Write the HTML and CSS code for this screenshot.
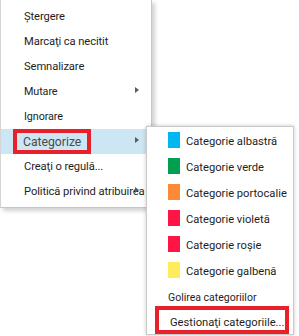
FILE: index.html
```html
<!DOCTYPE html>
<html lang="ro">
<head>
<meta charset="utf-8">
<link rel="stylesheet" href="styles.css">
</head>
<body>
<div class="stage">
  <ul class="menu main">
    <li class="item">Ştergere</li>
    <li class="item">Marcaţi ca necitit</li>
    <li class="item">Semnalizare</li>
    <li class="item small has-sub">Mutare</li>
    <li class="item small">Ignorare</li>
    <li class="item active has-sub mark">Categorize</li>
    <li class="item">Creaţi o regulă...</li>
    <li class="item has-sub">Politică privind atribuirea</li>
  </ul>
  <ul class="menu sub">
    <li class="cat"><span class="swatch blue"></span><span class="label">Categorie albastră</span></li>
    <li class="cat"><span class="swatch green"></span><span class="label">Categorie verde</span></li>
    <li class="cat"><span class="swatch orange"></span><span class="label">Categorie portocalie</span></li>
    <li class="cat"><span class="swatch purple"></span><span class="label">Categorie violetă</span></li>
    <li class="cat"><span class="swatch red"></span><span class="label">Categorie roşie</span></li>
    <li class="cat"><span class="swatch yellow"></span><span class="label">Categorie galbenă</span></li>
    <li class="plain clear">Golirea categoriilor</li>
    <li class="plain manage mark">Gestionaţi categoriile...</li>
  </ul>
</div>
</body>
</html>
```
FILE: styles.css
```css
html, body {
  margin: 0;
  padding: 0;
  background: #ffffff;
}
body {
  font-family: Roboto, "Liberation Sans", Arial, sans-serif;
  font-size: 11.2px;
  color: #1e1e1e;
}
.stage {
  position: relative;
  width: 299px;
  height: 336px;
  overflow: hidden;
}
.menu {
  list-style: none;
  margin: 0;
  background: #ffffff;
}
.main {
  width: 150px;
  padding: 4px 0 3px 0;
  border-left: 1px solid #d4d4d4;
  border-right: 1px solid #c6c6c6;
  border-bottom: 1px solid #c6c6c6;
  box-shadow: 3px 3px 4px rgba(0, 0, 0, 0.18);
}
.item {
  position: relative;
  height: 25px;
  display: flex;
  align-items: center;
  padding-left: 23px;
  white-space: nowrap;
  letter-spacing: -0.1px;
}
.item.small {
  font-size: 10.8px;
}
.item.active {
  background: #cde6f4;
  color: #4a4a4a;
  font-size: 12.2px;
  letter-spacing: 0;
  padding-left: 22px;
}
.has-sub::after {
  content: "";
  position: absolute;
  left: 134px;
  top: 8px;
  border-left: 4px solid #5c5c5c;
  border-top: 3.5px solid transparent;
  border-bottom: 3.5px solid transparent;
}
.main .mark::before {
  content: "";
  position: absolute;
  left: 12px;
  top: 0;
  width: 78px;
  height: 25px;
  box-sizing: border-box;
  border: 4px solid #e8202a;
}
.sub {
  position: absolute;
  left: 146px;
  top: 126px;
  width: 146px;
  padding: 0;
  border: 1px solid #c9c9c9;
  box-shadow: 0 0 4px rgba(0, 0, 0, 0.22);
}
.cat {
  height: 26px;
  display: flex;
  align-items: center;
  padding-left: 21px;
  white-space: nowrap;
}
.label {
  padding-top: 3px;
}
.swatch {
  width: 12px;
  height: 16px;
  margin-right: 6px;
  flex: none;
}
.blue { background: #00b7f0; }
.green { background: #00a050; }
.orange { background: #ff8a35; }
.purple { background: #ff1446; }
.red { background: #ff1446; }
.yellow { background: #ffec5a; }
.plain {
  position: relative;
  display: flex;
  align-items: center;
  white-space: nowrap;
}
.clear {
  height: 26px;
  padding-left: 21px;
  padding-top: 2px;
  box-sizing: border-box;
  font-size: 10.5px;
}
.manage {
  height: 25px;
  padding-left: 23px;
  padding-top: 2px;
  box-sizing: border-box;
  font-size: 11.2px;
}
.sub .mark::before {
  content: "";
  position: absolute;
  left: 8px;
  top: -3px;
  width: 134px;
  height: 28px;
  box-sizing: border-box;
  border: 4px solid #e8202a;
}
```
